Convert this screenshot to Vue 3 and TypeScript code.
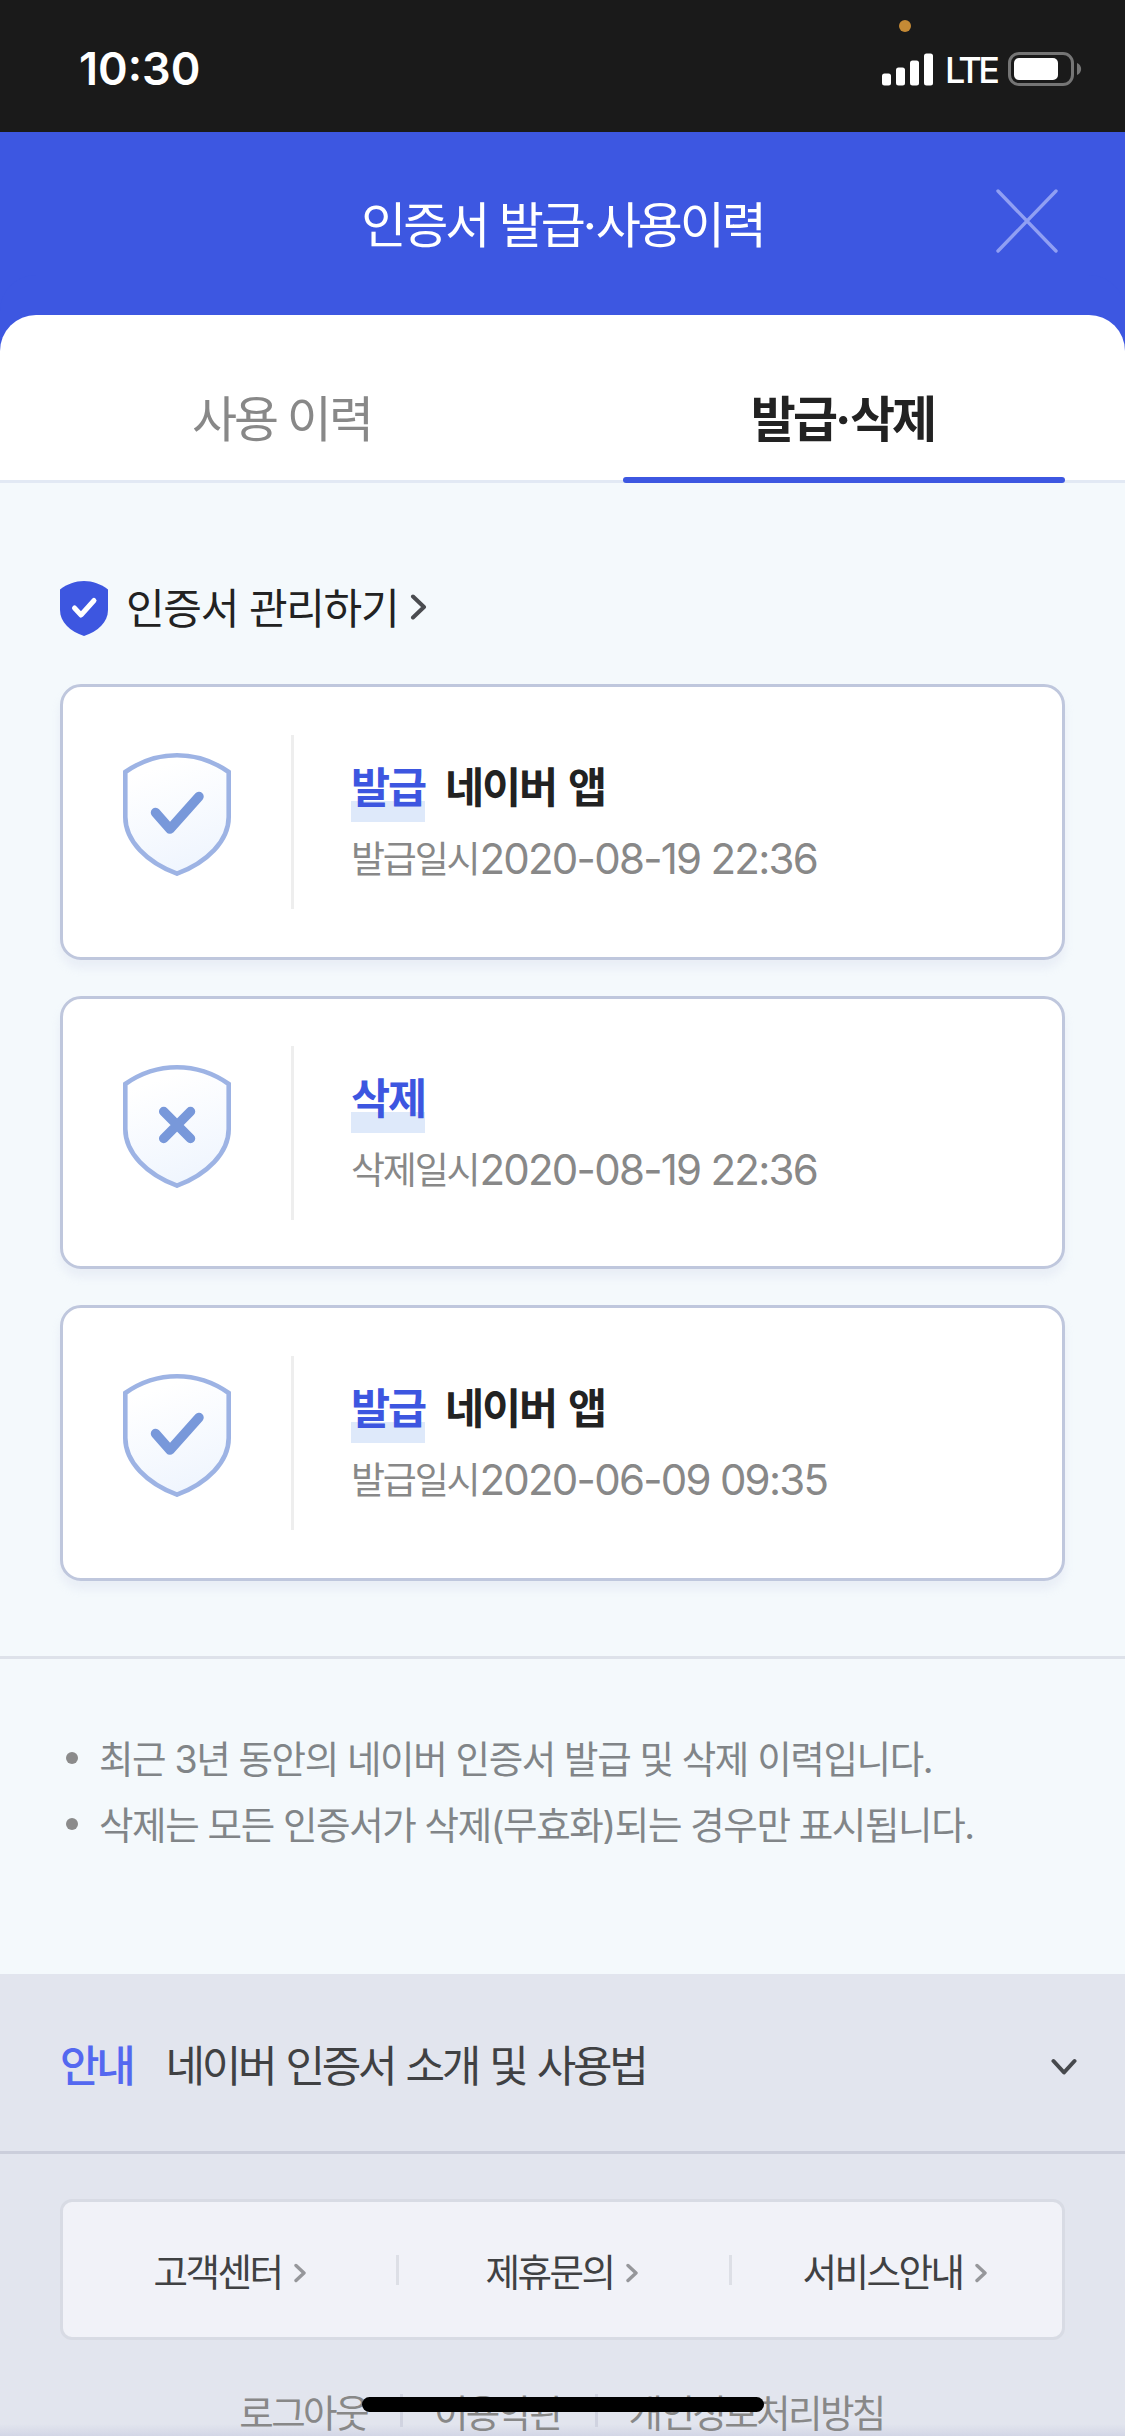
<script setup lang="ts">
interface HistoryItem {
  kind: 'issue' | 'delete'
  label: string
  app?: string
  dateLabel: string
  date: string
}

const history: HistoryItem[] = [
  { kind: 'issue', label: '발급', app: '네이버 앱', dateLabel: '발급일시', date: '2020-08-19 22:36' },
  { kind: 'delete', label: '삭제', dateLabel: '삭제일시', date: '2020-08-19 22:36' },
  { kind: 'issue', label: '발급', app: '네이버 앱', dateLabel: '발급일시', date: '2020-06-09 09:35' },
]
const notes: string[] = [
  '최근 3년 동안의 네이버 인증서 발급 및 삭제 이력입니다.',
  '삭제는 모든 인증서가 삭제(무효화)되는 경우만 표시됩니다.',
]
const links: string[] = ['고객센터', '제휴문의', '서비스안내']
const policies: string[] = ['로그아웃', '이용약관', '개인정보처리방침']
</script>

<template>
  <div class="screen">
    <div class="status">
      <span class="time">10:30</span>
      <span class="mic"></span>
      <div class="indicators">
        <svg class="signal" width="51" height="33" viewBox="0 0 51 33" fill="#fff">
          <rect x="0" y="20.5" width="9" height="12" rx="2.5" />
          <rect x="14" y="14.5" width="9" height="18" rx="2.5" />
          <rect x="28" y="7.5" width="9" height="25" rx="2.5" />
          <rect x="42" y="0.5" width="9" height="32" rx="2.5" />
        </svg>
        <span class="lte">LTE</span>
        <svg class="battery" width="74" height="34" viewBox="0 0 74 34">
          <rect x="1.5" y="1.5" width="63" height="31" rx="9.5" fill="none" stroke="#757575" stroke-width="3" />
          <rect x="6" y="6" width="44" height="22" rx="5" fill="#fff" />
          <path d="M69 11 C74.5 13 74.5 21 69 23 Z" fill="#757575" />
        </svg>
      </div>
    </div>

    <header class="header">
      <h1>인증서 발급<i class="dot">·</i>사용이력</h1>
      <svg class="close" width="64" height="64" viewBox="0 0 64 64" stroke="#909ff3" stroke-width="3.4" stroke-linecap="round">
        <path d="M3 2 L61 62 M61 2 L3 62" />
      </svg>
    </header>

    <nav class="tabs">
      <div class="tab">사용 이력</div>
      <div class="tab active">발급<i class="dot">·</i>삭제</div>
    </nav>

    <main class="main">
      <div class="manage">
        <svg width="48" height="55" viewBox="0 0 48 55">
          <path d="M0 8.5 C7 3 15.5 0 24 0 S41 3 48 8.5 V29 C48 41 38 50.5 24 55 C10 50.5 0 41 0 29 Z" fill="#3d56e0" />
          <path d="M14.5 27 L21 34 L34 19.5" fill="none" stroke="#fff" stroke-width="5" stroke-linecap="round" stroke-linejoin="round" />
        </svg>
        <span class="manage-text">인증서 관리하기</span>
        <svg class="arrow" width="18" height="26" viewBox="0 0 18 26" fill="none" stroke="#4a4c50" stroke-width="4" stroke-linecap="round" stroke-linejoin="round">
          <path d="M3 2.5 L14 13 L3 23.5" />
        </svg>
      </div>

      <section v-for="(item, i) in history" :key="i" class="card" :class="item.kind">
        <svg class="shield" width="108" height="123" viewBox="0 0 108 123" fill="none">
          <defs>
            <linearGradient :id="'fill' + i" x1="0.3" y1="0" x2="0.6" y2="1">
              <stop offset="0.1" stop-color="#fff" />
              <stop offset="1" stop-color="#eff5fe" />
            </linearGradient>
          </defs>
          <path d="M2.3 19 C18 8 36 2.3 54 2.3 S90 8 105.7 19 V64 C105.7 88 84 109.5 54 120.7 C24 109.5 2.3 88 2.3 64 Z" :fill="`url(#fill${i})`" stroke="#9db3e4" stroke-width="4.6" />
          <path v-if="item.kind === 'issue'" d="M32.5 59.5 L47 76 L76 43.5" stroke="#7898da" stroke-width="9.5" stroke-linecap="round" stroke-linejoin="round" />
          <path v-else d="M40.7 46.5 L67.5 73.5 M67.5 46.5 L40.7 73.5" stroke="#7898da" stroke-width="9.5" stroke-linecap="round" />
        </svg>
        <div class="rule"></div>
        <div class="info">
          <div class="title">
            <span class="mark">{{ item.label }}</span>
            <span v-if="item.app" class="app">{{ item.app }}</span>
          </div>
          <div class="date">
            <span class="date-label">{{ item.dateLabel }}</span>
            <span class="date-value">{{ item.date }}</span>
          </div>
        </div>
      </section>
    </main>

    <ul class="notes">
      <li v-for="note in notes" :key="note"><span>{{ note }}</span></li>
    </ul>

    <div class="guide">
      <strong>안내</strong>
      <span class="guide-text">네이버 인증서 소개 및 사용법</span>
      <svg width="26" height="18" viewBox="0 0 26 18" fill="none" stroke="#47494d" stroke-width="4" stroke-linecap="round" stroke-linejoin="round">
        <path d="M2.5 3 L13 14.5 L23.5 3" />
      </svg>
    </div>

    <footer class="footer">
      <div class="links">
        <a v-for="link in links" :key="link">
          <span>{{ link }}</span>
          <svg width="12" height="20" viewBox="0 0 12 20" fill="none" stroke="#96979b" stroke-width="3.4" stroke-linecap="round" stroke-linejoin="round">
            <path d="M2 2.5 L10 10 L2 17.5" />
          </svg>
        </a>
      </div>
      <div class="policies">
        <a v-for="policy in policies" :key="policy">{{ policy }}</a>
      </div>
      <div class="home-bar"></div>
    </footer>
  </div>
</template>

<style>
body { margin: 0; background: #e2e5ee; }
</style>

<style scoped>
.screen {
  position: relative;
  width: 1125px;
  height: 2436px;
  overflow: hidden;
  display: flex;
  flex-direction: column;
  background: #f4f9fc;
  color: #222;
  font-family: "Noto Sans CJK KR", sans-serif;
  white-space: nowrap;
}
.screen * { box-sizing: border-box; }
.screen > * { flex-shrink: 0; }
.dot { display: inline-block; width: 13px; font-family: Inter, sans-serif; font-style: normal; letter-spacing: 0; text-align: center; }

.status {
  position: relative;
  height: 132px;
  padding: 0 43px 0 79px;
  display: flex;
  justify-content: space-between;
  align-items: flex-start;
  background: #1a1a1a;
  color: #fff;
  font-family: Inter, sans-serif;
}
.time { margin-top: 39px; font-size: 45px; line-height: 60px; font-weight: 600; }
.mic { position: absolute; left: 899px; top: 20px; width: 12px; height: 12px; border-radius: 50%; background: #c58a35; }
.indicators { display: flex; margin-top: 52px; height: 34px; align-items: center; }
.lte { margin-left: 12px; margin-top: 2px; width: 63px; font-size: 36px; line-height: 36px; letter-spacing: -3.6px; font-weight: 500; }

.header {
  height: 183px;
  display: grid;
  grid-template-columns: 130px 1fr 130px;
  align-items: center;
  background: #3d57e1;
  color: #fff;
}
.close { margin-top: -6px; }
h1 { grid-column: 2; margin: 0; text-align: center; font-size: 49px; line-height: 60px; font-weight: 400; letter-spacing: -3.1px; word-spacing: 3.7px; }

.tabs {
  height: 168px;
  padding-right: 60px;
  display: grid;
  grid-template-columns: 1fr 442px;
  column-gap: 60px;
  border-bottom: 3px solid #e2e9f4;
  background: #fff;
  border-radius: 36px 36px 0 0;
  box-shadow: 0 -40px 0 0 #3d57e1;
}
.tab { padding-top: 71px; height: 168px; text-align: center; font-size: 49px; line-height: 60px; letter-spacing: -3px; word-spacing: 2.7px; color: #888; }
.tab.active { position: relative; padding-right: 3px; color: #222; font-weight: 700; }
.tab.active .dot { width: 15px; }
.tab.active::after { content: ""; position: absolute; left: 0; right: 0; bottom: 0; height: 6px; border-radius: 3px; background: #3d57e1; }

.main { height: 1173px; padding: 98px 60px 0; }
.manage { height: 55px; margin-bottom: 48px; display: flex; align-items: center; }
.manage-text { margin-left: 18px; margin-top: -6px; font-size: 42px; line-height: 55px; letter-spacing: -1.3px; word-spacing: 2.8px; }
.arrow { margin-left: 12px; margin-top: -4px; }

.card {
  display: flex;
  height: 276px;
  margin-bottom: 36px;
  padding: 48px 0 0 60px;
  border: 3px solid #bfc7dd;
  border-radius: 21px;
  background: #fff;
  box-shadow: 0 8px 10px rgba(190, 195, 225, .2);
}
.card.delete { height: 273px; padding-top: 47px; }
.shield { margin-top: 18px; }
.card.delete .shield { margin-top: 19px; }
.rule { width: 3px; height: 174px; margin-left: 60px; background: #eee; }
.info { margin-left: 57px; padding-top: 20px; }
.title { display: flex; font-size: 42.5px; line-height: 60px; font-weight: 700; letter-spacing: -2.1px; word-spacing: 4.5px; }
.mark { height: 67px; color: #3d56e0; background: linear-gradient(#dee9fa, #dee9fa) 0 46px / 100% 21px no-repeat; }
.app { margin-left: 20px; }
.date { display: flex; color: #888; margin-top: 10px; }
.date-label { margin-top: -2px; font-size: 37px; line-height: 54px; letter-spacing: -2.2px; }
.date-value { margin-left: 1px; font-family: Inter, sans-serif; font-size: 42px; line-height: 54px; letter-spacing: -1.75px; }

.notes {
  height: 318px;
  margin: 0;
  padding: 66px 66px 0;
  list-style: none;
  border-top: 3px solid #dee2ea;
  color: #818588;
  font-family: Inter, "Noto Sans CJK KR", sans-serif;
  font-size: 37.5px;
  line-height: 66px;
  letter-spacing: -1.38px;
}
.notes li { display: flex; align-items: center; height: 66px; }
.notes li::before { content: ""; width: 12px; height: 12px; margin-right: 21px; border-radius: 50%; background: #8b8b8b; }
.notes span { margin-top: 3px; }

.guide {
  height: 180px;
  padding: 0 48px 0 60px;
  display: flex;
  align-items: center;
  border-bottom: 3px solid #cbcedb;
  background: #e2e5ee;
  font-size: 43px;
  line-height: 60px;
  color: #404143;
  letter-spacing: -3.3px;
  word-spacing: 4.9px;
}
.guide strong { font-weight: 500; color: #5468f0; }
.guide-text { flex: 1; margin-left: 33px; }
.guide svg { margin-top: 9px; }

.footer { flex: 1; position: relative; padding: 45px 60px 0; background: linear-gradient(transparent 270px, #d3d6e6), #e2e5ee; }
.links {
  height: 141px;
  display: grid;
  grid-template-columns: repeat(3, 1fr);
  align-items: center;
  border: 3px solid #d8dbe4;
  border-radius: 12px;
  background: #f1f2f8;
}
.links a { display: flex; align-items: center; justify-content: center; gap: 12px; height: 30px; font-size: 37.5px; line-height: 50px; letter-spacing: -2.5px; color: #404143; }
.links a + a { padding-right: 5px; border-left: 3px solid #dddfe6; }
.links svg { margin-top: 7px; }
.policies { display: flex; justify-content: center; margin-top: 54px; }
.policies a { height: 33px; display: flex; align-items: center; padding: 0 33px 0 31px; color: #888; font-size: 37.5px; line-height: 50px; letter-spacing: -2.6px; }
.policies a + a { border-left: 3px solid #d0d3e0; }
.home-bar { position: absolute; left: 362px; top: 243px; width: 402px; height: 15px; border-radius: 8px; background: #000; }
</style>
